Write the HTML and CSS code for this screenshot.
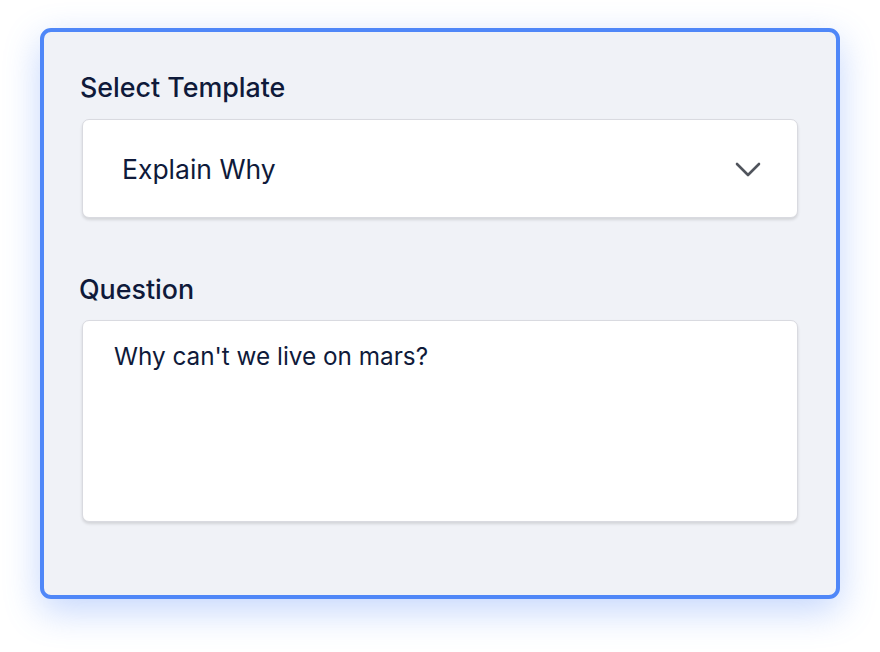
FILE: index.html
```html
<!DOCTYPE html>
<html>
<head>
<meta charset="utf-8">
<link rel="stylesheet" href="styles.css">
</head>
<body>
<div class="card">
  <div class="label">Select Template</div>
  <div class="select">
    <span class="select-text">Explain Why</span>
    <svg class="chevron" width="26" height="16" viewBox="0 0 26 16"><path d="M2 2 L13 13 L24 2" fill="none" stroke="#50545c" stroke-width="2.6" stroke-linecap="round" stroke-linejoin="round"/></svg>
  </div>
  <div class="label label-q">Question</div>
  <div class="textarea">Why can't we live on mars?</div>
</div>
</body>
</html>
```
FILE: styles.css
```css
html, body { margin: 0; padding: 0; background: #ffffff; }
body {
  width: 880px; height: 652px;
  font-family: Inter, "Noto Sans", sans-serif;
  color: #0f1a3a;
  padding: 28px 40px 0 40px;
  box-sizing: border-box;
}
.card {
  width: 800px;
  height: 571px;
  box-sizing: border-box;
  border: 4px solid #4f87f8;
  border-radius: 11px;
  background: #f0f2f7;
  box-shadow: 0 12px 36px rgba(79,135,248,0.33);
  padding: 39px 38px 0 38px;
}
.label {
  font-size: 26.8px;
  line-height: 33px;
  font-weight: 500;
  margin-left: -2px;
}
.label-q { margin-top: 55px; margin-left: -3px; }
.select {
  margin-top: 15px;
  height: 99px;
  box-sizing: border-box;
  background: #fff;
  border: 1px solid #d9dae0;
  border-radius: 7px;
  box-shadow: 0 2px 3px rgba(0,0,0,0.12);
  display: flex;
  align-items: center;
  justify-content: space-between;
  padding: 0 36px 0 39px;
}
.select-text { font-size: 26.5px; }
.chevron { display: block; margin-top: 2px; }
.textarea {
  margin-top: 14px;
  height: 202px;
  box-sizing: border-box;
  background: #fff;
  border: 1px solid #d9dae0;
  border-radius: 7px;
  box-shadow: 0 2px 3px rgba(0,0,0,0.12);
  padding: 19px 31px;
  font-size: 24.3px;
  line-height: 32px;
}
```
